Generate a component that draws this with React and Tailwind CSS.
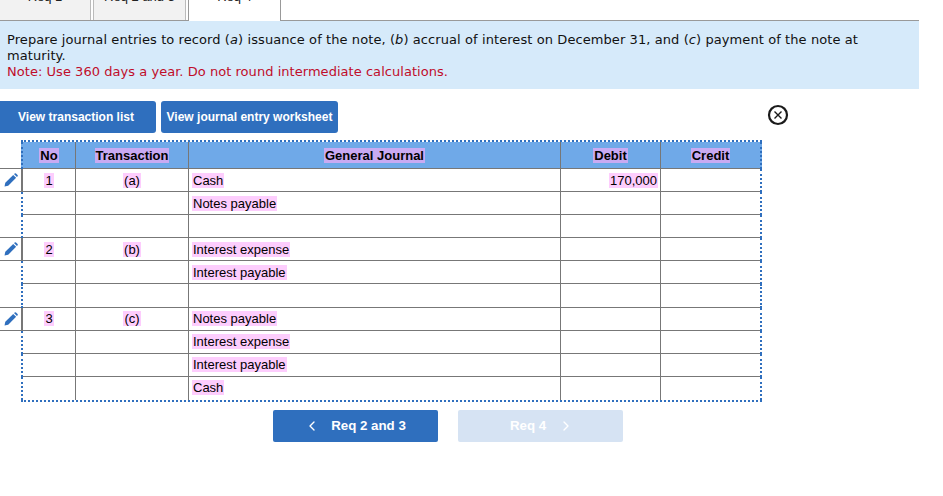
import React from 'react';
import { ChevronLeft, ChevronRight } from 'lucide-react';

const rows = [
  { no: '1', tx: '(a)', account: 'Cash', debit: '170,000', edit: true },
  { account: 'Notes payable' },
  {},
  { no: '2', tx: '(b)', account: 'Interest expense', edit: true },
  { account: 'Interest payable' },
  { tall: true },
  { no: '3', tx: '(c)', account: 'Notes payable', edit: true, up: true },
  { account: 'Interest expense', up: true },
  { account: 'Interest payable', up: true },
  { account: 'Cash', up: true },
];

const Mark = ({ children }) => <span className="inline-block bg-[#fdcdfd] px-px leading-[15px]">{children}</span>;
const HeadMark = ({ children }) => <span className="inline-block bg-[#c9aaf2] px-px leading-[15px]">{children}</span>;

const Pencil = () => (
  <svg width="14" height="14" viewBox="0 0 14 14" fill="#2f6fbe">
    <path d="M0.5 13.5L1.3 9.8L9.2 1.9L12.1 4.8L4.2 12.7Z" />
    <path d="M10 1.1L10.8 0.4Q11.4 0 12 0.4L13.6 2Q14 2.6 13.6 3.2L12.9 4Z" />
  </svg>
);

const Tab = ({ label, className }) => (
  <div className={`flex justify-center overflow-hidden ${className}`}>
    <span className="-mt-[11px] text-[13px] leading-[15px] text-[#222]">{label}</span>
  </div>
);

const App = () => {
  return (
    <div className="w-[943px] h-[496px] bg-white font-['Liberation_Sans',sans-serif] text-black overflow-hidden">
      <div className="flex w-[919px] h-[21px] border-b border-[#999]">
        <Tab label="Req 1" className="w-[91px] h-5 bg-[#f2f2f2] border-r border-[#bbb]" />
        <Tab label="Req 2 and 3" className="w-[93px] h-5 ml-[2px] bg-[#f2f2f2] border-x border-[#bbb]" />
        <Tab label="Req 4" className="w-[93px] h-[21px] ml-[2px] bg-white border-x border-[#999]" />
      </div>

      <div className="w-[919px] h-[68px] bg-[#d6eafa] pl-[7px] pr-[50px] pt-[11px] font-['DejaVu_Sans',sans-serif] text-[13px] leading-4 text-[#111]">
        <p className="tracking-[0.085px]">
          Prepare journal entries to record (<i>a</i>) issuance of the note, (<i>b</i>) accrual of interest on December 31, and (<i>c</i>) payment of the note at maturity.
        </p>
        <p className="tracking-[0.04px] text-[#c00d2a]">Note: Use 360 days a year. Do not round intermediate calculations.</p>
      </div>

      <div className="flex items-start w-[789px] mt-3 gap-[5px]">
        <button className="w-[156px] h-8 pr-1 rounded-r-[3px] bg-[#2f6fbe] text-white text-xs font-bold">View transaction list</button>
        <button className="w-[177px] h-8 rounded-[3px] bg-[#2f6fbe] text-white text-xs font-bold">View journal entry worksheet</button>
        <svg className="ml-auto mt-[3px]" width="22" height="22" viewBox="0 0 22 22" fill="none" stroke="#1a1a1a">
          <circle cx="11" cy="11" r="9" strokeWidth="2.2" />
          <path d="M7.5 7.5l7 7M14.5 7.5l-7 7" strokeWidth="1.4" />
        </svg>
      </div>

      <div className="mt-[7px] w-[762px] text-[13px]">
        <div className="ml-[21px] border-t-2 border-dotted border-[#2f6fbe]" />
        <div className="flex h-[27px]">
          <div className="w-[21px] border-b border-[#777]" />
          <div className="flex flex-1 items-stretch border-x-2 border-x-[#2f6fbe] border-dotted bg-[#6fa9e8] font-bold">
            <div className="w-[53px] border-r border-b border-[#777] border-solid flex items-center justify-center"><HeadMark>No</HeadMark></div>
            <div className="w-[113px] border-r border-b border-[#777] border-solid flex items-center justify-center"><HeadMark>Transaction</HeadMark></div>
            <div className="w-[372px] border-r border-b border-[#777] border-solid flex items-center justify-center"><HeadMark>General Journal</HeadMark></div>
            <div className="w-[100px] border-r border-b border-[#777] border-solid flex items-center justify-center"><HeadMark>Debit</HeadMark></div>
            <div className="flex-1 border-b border-[#777] border-solid flex items-center justify-center"><HeadMark>Credit</HeadMark></div>
          </div>
        </div>
        {rows.map((row, i) => {
          const gutterLine = row.edit || rows[i + 1]?.edit;
          const line = i < 9 ? 'border-b' : '';
          const shift = row.up ? 'pb-[2px]' : '';
          return (
            <div key={i} className={`flex ${row.tall ? 'h-6' : 'h-[23px]'}`}>
              <div className={`w-[21px] flex items-center justify-center ${gutterLine ? 'border-b border-[#777]' : ''}`}>
                {row.no && <Pencil />}
              </div>
              <div
                className={`flex flex-1 items-stretch border-r-2 border-r-[#2f6fbe] border-dotted border-l-2 ${
                  row.edit ? 'border-l-[#777] [border-left-style:solid]' : 'border-l-[#2f6fbe]'
                }`}
              >
                <div className={`w-[53px] border-r border-[#777] border-solid flex items-center justify-center ${line} ${shift}`}>
                  {row.no && <Mark>{row.no}</Mark>}
                </div>
                <div className={`w-[113px] border-r border-[#777] border-solid flex items-center justify-center ${line} ${shift}`}>
                  {row.tx && <Mark>{row.tx}</Mark>}
                </div>
                <div className={`w-[372px] border-r border-[#777] border-solid flex items-center pl-[3px] ${line} ${shift}`}>
                  {row.account && <Mark>{row.account}</Mark>}
                </div>
                <div className={`w-[100px] border-r border-[#777] border-solid flex items-center justify-end pr-[2px] ${line}`}>
                  {row.debit && <Mark>{row.debit}</Mark>}
                </div>
                <div className={`flex-1 border-[#777] border-solid ${line}`} />
              </div>
            </div>
          );
        })}
        <div className="ml-[21px] border-t-2 border-dotted border-[#2f6fbe]" />
      </div>

      <div className="flex ml-[273px] mt-2 gap-5">
        <button className="w-[165px] h-8 pr-px rounded-[2px] bg-[#2f6fbe] text-white text-[13.3px] font-bold flex items-center justify-center gap-[11px]">
          <ChevronLeft size={16} />
          <span>Req 2 and 3</span>
        </button>
        <button className="w-[165px] h-8 pl-[3px] rounded-[2px] bg-[#d6e3f3] text-white text-[13.3px] font-bold flex items-center justify-center gap-3">
          <span>Req 4</span>
          <ChevronRight size={16} />
        </button>
      </div>
    </div>
  );
};

export default App;
